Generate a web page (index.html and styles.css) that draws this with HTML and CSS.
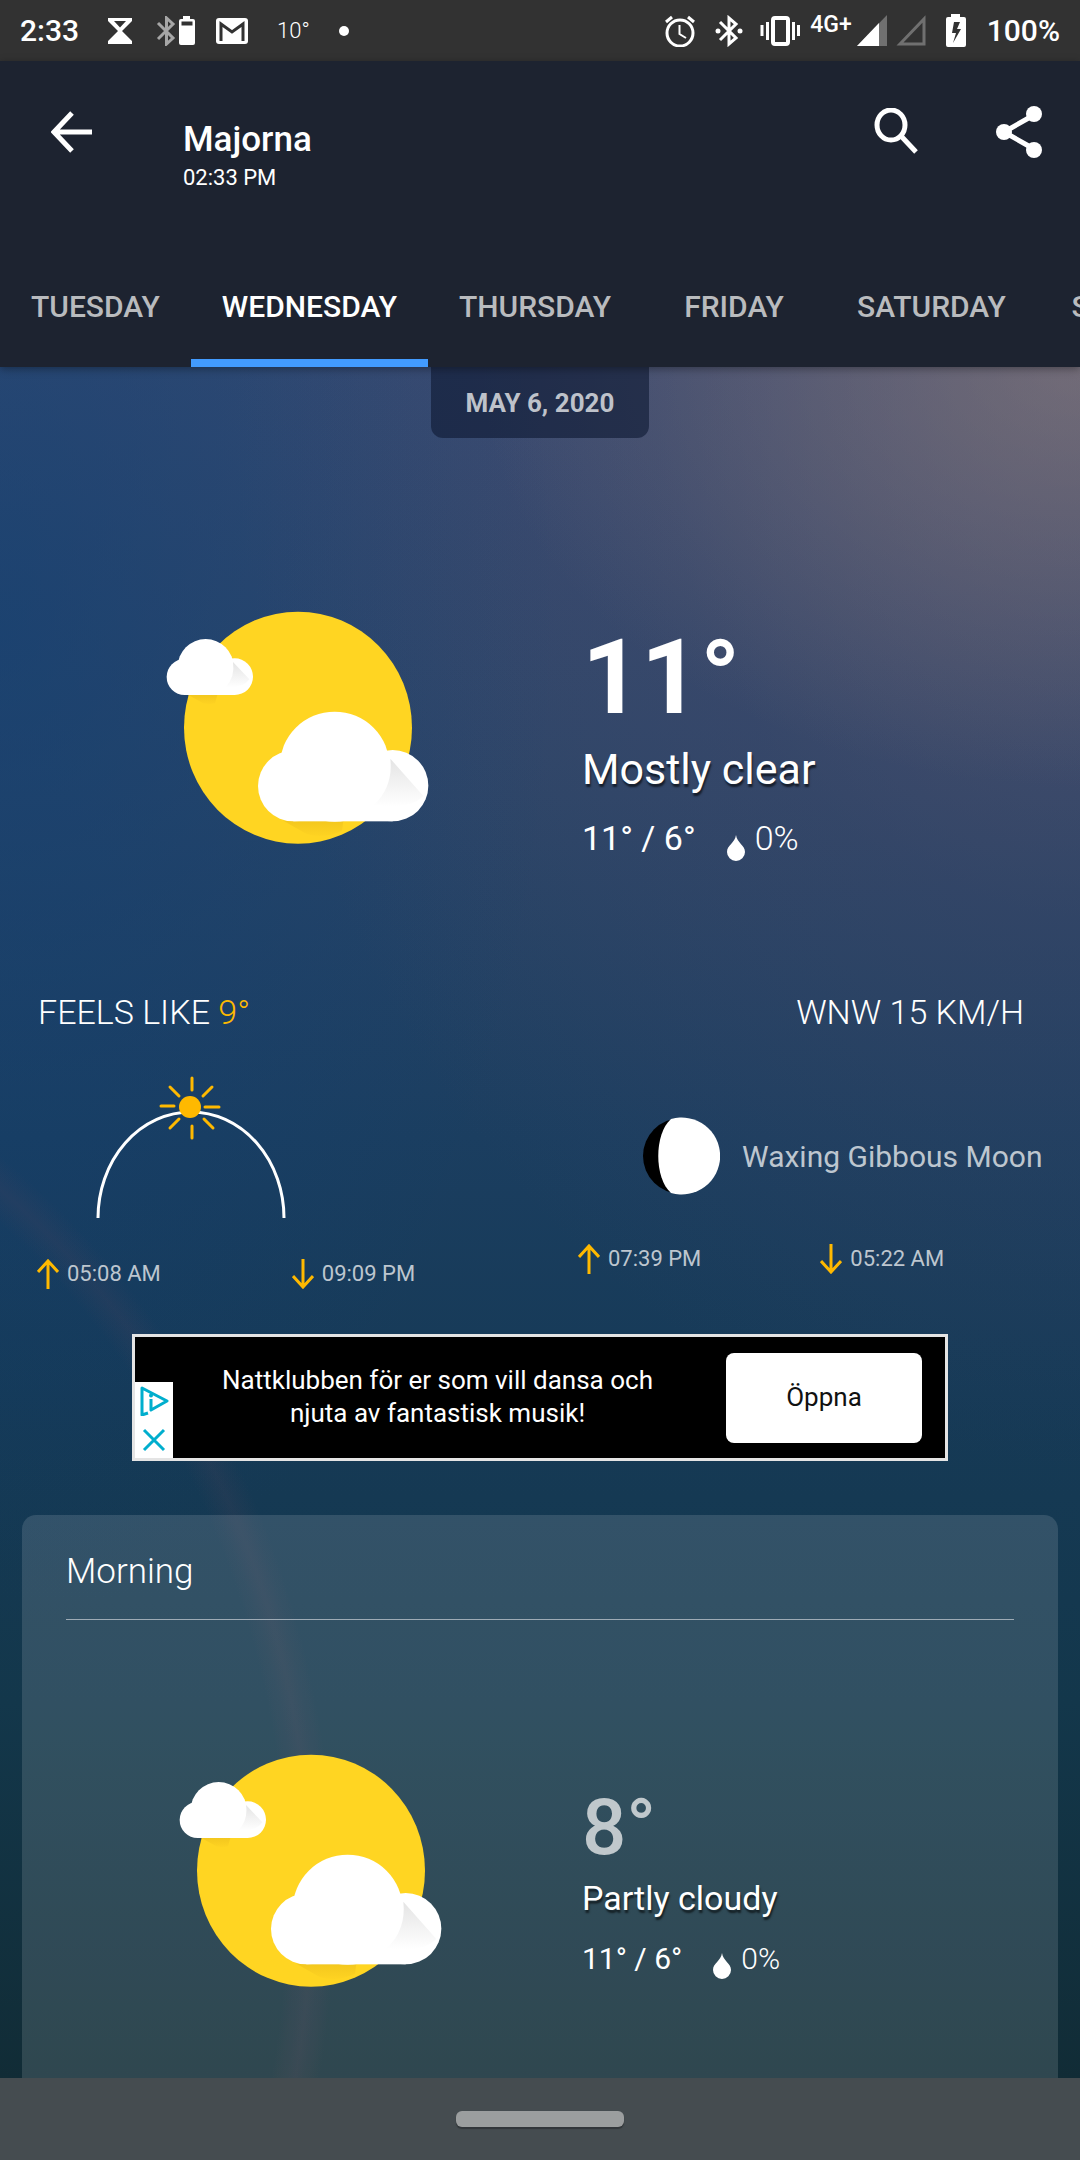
FILE: index.html
```html
<!DOCTYPE html>
<html lang="en">
<head>
<meta charset="utf-8">
<meta name="viewport" content="width=device-width, initial-scale=1">
<title>Majorna weather</title>
<link rel="stylesheet" href="styles.css">
</head>
<body>
<svg class="defs" aria-hidden="true">
  <defs>
    <linearGradient id="fold" x1="0" y1="0" x2="0" y2="1">
      <stop offset="0" stop-color="#e4e4e4"/><stop offset="1" stop-color="#fff"/>
    </linearGradient>
    <linearGradient id="cast" x1="0" y1="0" x2="0" y2="1">
      <stop offset="0" stop-color="#f3c71e"/><stop offset="1" stop-color="#fed322"/>
    </linearGradient>
    <symbol id="sun-clouds" viewBox="0 0 960 840">
      <ellipse cx="474" cy="413" rx="342" ry="348" fill="#ffd522"/>
      <path d="M145 315L190 340Q205 345 225 340L232 315Z" fill="url(#cast)"/>
      <path d="M430 692L500 732Q550 748 606 722L610 692Z" fill="url(#cast)"/>
      <g fill="#fff">
        <circle cx="134" cy="261" r="54"/>
        <circle cx="284" cy="260" r="55"/>
        <circle cx="197" cy="231" r="84"/>
        <rect x="134" y="231" width="150" height="84"/>
        <circle cx="460" cy="588" r="106"/>
        <circle cx="758" cy="587" r="107"/>
        <circle cx="584" cy="530" r="165"/>
        <rect x="460" y="534" width="298" height="160"/>
      </g>
      <path d="M279 216L328 268Q310 295 256 292Q286 262 279 216Z" fill="url(#fold)"/>
      <path d="M751 506L850 618Q810 660 702 645Q760 590 751 506Z" fill="url(#fold)"/>
    </symbol>
    <symbol id="drop" viewBox="0 0 18 26">
      <path d="M9 0C10 8 18 10 18 17A9 9 0 0 1 0 17C0 10 8 8 9 0Z" fill="#fff"/>
    </symbol>
    <symbol id="rise" viewBox="0 0 22 30">
      <path d="M11 30V2M1 13L11 2L21 13" fill="none" stroke="#ffb900" stroke-width="3"/>
    </symbol>
    <symbol id="set" viewBox="0 0 22 30">
      <path d="M11 0V28M1 17L11 28L21 17" fill="none" stroke="#ffb900" stroke-width="3"/>
    </symbol>
  </defs>
</svg>

<div class="app">
  <div class="status">
    <div class="status-group status-left">
      <span class="clock">2:33</span>
      <svg class="hourglass" width="24" height="26" viewBox="0 0 24 26"><path d="M0 0H24V3L14 13L24 23V26H0V23L10 13L0 3ZM6 3L12 9.500L18 3Z" fill="#fff" fill-rule="evenodd"/></svg>
      <svg class="bt-battery" width="40" height="30" viewBox="0 0 40 30"><path d="M2 7L17 22L10.500 28V2L17 8L2 23" fill="none" stroke="#a6a6a6" stroke-width="3"/><path d="M27 3V0H34V3H37Q39 3 39 5V27Q39 29 37 29H25Q23 29 23 27V5Q23 3 25 3ZM25.500 5.500V9.500H36.500V5.500Z" fill="#fff" fill-rule="evenodd"/></svg>
      <svg class="gmail" width="32" height="26" viewBox="0 0 32 26"><rect width="32" height="26" rx="3" fill="#fff"/><path d="M5 23V6L16 14L27 6V23" fill="none" stroke="#323232" stroke-width="3"/></svg>
      <span class="outside">10°</span>
      <span class="dot"></span>
    </div>
    <div class="status-group">
      <svg width="32" height="32" viewBox="0 0 32 32" fill="none" stroke="#fff"><circle cx="16" cy="18" r="13" stroke-width="3"/><path d="M2 7L8 2M30 7L24 2" stroke-width="3"/><path d="M15.500 10V19L22 23" stroke-width="2"/></svg>
      <svg class="bt" width="28" height="32" viewBox="0 0 28 32"><path d="M5 7L21 23L14 29V3L21 9L5 25" fill="none" stroke="#fff" stroke-width="3"/><circle cx="3" cy="16" r="2.500" fill="#fff"/><circle cx="25" cy="16" r="2.500" fill="#fff"/></svg>
      <svg class="vibrate" width="40" height="30" viewBox="0 0 40 30"><rect x="13" y="2" width="15" height="26" rx="2" fill="none" stroke="#fff" stroke-width="4"/><path d="M2 9V20M7.500 6V24M33.500 6V24M38.500 9V20" stroke="#fff" stroke-width="3"/></svg>
      <span class="net">4G+</span>
      <svg class="signal" width="30" height="31" viewBox="0 0 30 31"><path d="M0 31L30 0V31Z" fill="#707070"/><path d="M0 31L22 8V31Z" fill="#fff"/></svg>
      <svg class="signal2" width="30" height="31" viewBox="0 0 30 31"><path d="M4 29L28 4V29Z" fill="none" stroke="#707070" stroke-width="3"/></svg>
      <svg class="charge" width="20" height="33" viewBox="0 0 20 33"><path d="M5 3V0H14V3H18Q20 3 20 5V31Q20 33 18 33H2Q0 33 0 31V5Q0 3 2 3ZM8 8L6 19H10L7 29L15 15H11L14 8Z" fill="#fff" fill-rule="evenodd"/></svg>
      <span class="clock">100%</span>
    </div>
  </div>

  <header class="header">
    <div class="toolbar">
      <button class="icon-btn" aria-label="Back"><svg width="42" height="42" viewBox="0 0 42 42"><path d="M41 21H4M21 2L3 21L21 40" fill="none" stroke="#fff" stroke-width="5"/></svg></button>
      <div class="place">
        <h1>Majorna</h1>
        <p>02:33 PM</p>
      </div>
      <button class="icon-btn search" aria-label="Search"><svg width="46" height="48" viewBox="0 0 46 48"><ellipse cx="17" cy="17" rx="14" ry="15" fill="none" stroke="#fff" stroke-width="5"/><path d="M28 29L42 44" stroke="#fff" stroke-width="5"/></svg></button>
      <button class="icon-btn" aria-label="Share"><svg width="48" height="52" viewBox="0 0 48 52"><path d="M39 9L9 26L39 43" fill="none" stroke="#fff" stroke-width="5"/><circle cx="9" cy="26" r="8" fill="#fff"/><circle cx="39" cy="8" r="8" fill="#fff"/><circle cx="39" cy="44" r="8" fill="#fff"/></svg></button>
    </div>
    <nav class="tabs">
      <a href="#tue">Tuesday</a>
      <a href="#wed" class="active" aria-current="page">Wednesday</a>
      <a href="#thu">Thursday</a>
      <a href="#fri">Friday</a>
      <a href="#sat">Saturday</a>
      <a href="#sun">Sunday</a>
    </nav>
  </header>

  <main class="content">
    <p class="date">May 6, 2020</p>

    <section class="now">
      <svg class="sky" role="img" aria-label="Mostly clear"><use href="#sun-clouds"/></svg>
      <div class="reading">
        <p class="temp">11°</p>
        <p class="summary">Mostly clear</p>
        <p class="range"><span>11° / 6°</span><svg class="drop"><use href="#drop"/></svg><span class="rain">0%</span></p>
      </div>
    </section>

    <section class="facts">
      <p>FEELS LIKE <span class="accent">9°</span></p>
      <p>WNW 15 KM/H</p>
    </section>

    <section class="astro">
      <div class="sun">
        <svg class="arc" width="192" height="144" viewBox="0 0 192 144">
          <path d="M3 142A93 106 0 0 1 189 142" fill="none" stroke="#fff" stroke-width="3"/>
          <circle cx="95" cy="31" r="11" fill="#ffb900"/>
          <path d="M97 2V14M97 50V62M66 30H79M110 31H124M75 11L84 20M117 11L108 20M75 52L84 43M118 52L109 43" stroke="#ffb900" stroke-width="3" stroke-linecap="round"/>
        </svg>
        <div class="times">
          <span class="time"><svg><use href="#rise"/></svg>05:08 AM</span>
          <span class="time"><svg><use href="#set"/></svg>09:09 PM</span>
        </div>
      </div>
      <div class="moon">
        <div class="phase">
          <svg width="78" height="78" viewBox="0 0 78 78"><circle cx="39" cy="39" r="38" fill="#000"/><path d="M29 2A38.500 38.500 0 1 1 29 76C12 61 12 17 29 2Z" fill="#fff"/></svg>
          <span>Waxing Gibbous Moon</span>
        </div>
        <div class="times">
          <span class="time"><svg><use href="#rise"/></svg>07:39 PM</span>
          <span class="time"><svg><use href="#set"/></svg>05:22 AM</span>
        </div>
      </div>
    </section>

    <aside class="ad">
      <div class="ad-badge">
        <svg width="30" height="30" viewBox="0 0 30 30" fill="none" stroke="#00aecd"><path d="M9 27L3 29V2L28 15L12 24V13" stroke-width="3" stroke-linejoin="round"/><circle cx="12" cy="9.500" r="1" stroke-width="2"/></svg>
        <svg width="24" height="24" viewBox="0 0 24 24"><path d="M2 2L22 22M22 2L2 22" stroke="#00aecd" stroke-width="3"/></svg>
      </div>
      <p>Nattklubben för er som vill dansa och njuta av fantastisk musik!</p>
      <button>Öppna</button>
    </aside>

    <section class="card">
      <h2>Morning</h2>
      <div class="period">
        <svg class="sky" role="img" aria-label="Partly cloudy"><use href="#sun-clouds"/></svg>
        <div class="reading">
          <p class="temp">8°</p>
          <p class="summary">Partly cloudy</p>
          <p class="range"><span>11° / 6°</span><svg class="drop"><use href="#drop"/></svg><span class="rain">0%</span></p>
        </div>
      </div>
    </section>
  </main>

  <footer class="system-nav"><span class="handle"></span></footer>
</div>
</body>
</html>
```
FILE: styles.css
```css
* { box-sizing: border-box; }
body, h1, h2, p { margin: 0; font-weight: 400; }
body { font-family: Roboto, "Noto Sans", sans-serif; color: #fff; background: #12303c; }
button { border: 0; padding: 0; background: none; font: inherit; }
svg { display: block; flex: none; }
.defs { position: absolute; width: 0; height: 0; }

.app { min-height: 100vh; display: flex; flex-direction: column; overflow-x: clip; }

/* System status bar */
.status { background: #323232; height: 61px; padding: 0 20px; display: flex; justify-content: space-between; align-items: center; }
.status-group { display: flex; align-items: center; }
.clock { font-size: 30px; font-weight: 500; }
.hourglass { margin-left: 29px; }
.bt-battery { margin-left: 24px; }
.gmail { margin-left: 20px; }
.outside { margin-left: 29px; font-size: 22px; font-weight: 300; }
.dot { width: 10px; height: 10px; border-radius: 50%; background: #fff; margin-left: 29px; }
.bt { margin-left: 19px; }
.vibrate { margin-left: 17px; }
.net { margin-left: 10px; font-size: 23px; line-height: 24px; font-weight: 500; align-self: flex-start; }
.signal { margin-left: 5px; }
.signal2 { margin-left: 9px; }
.charge { margin: 0 21px 0 20px; }

/* App header */
.header { background: #1d2330; position: relative; box-shadow: 0 2px 8px rgba(0, 0, 0, .35); }
.toolbar { display: flex; align-items: flex-start; padding: 45px 37px 0 51px; }
.icon-btn { height: 52px; display: flex; align-items: center; }
.place { flex: 1; padding: 13px 0 0 90px; }
.place h1 { font-size: 35px; line-height: 42px; font-weight: 500; }
.place p { font-size: 22px; line-height: 34px; }
.search { margin-right: 75px; }
.tabs { display: flex; margin-top: 52px; overflow: hidden; }
.tabs a { min-width: 184px; padding: 0 31px; height: 120px; line-height: 120px; text-align: center; font-size: 30px; font-weight: 500; text-transform: uppercase; text-decoration: none; color: #b9bbbe; flex: none; }
.tabs .active { color: #fff; box-shadow: inset 0 -8px #429bff; }

/* Day page over the evening sky */
.content {
  flex: 1; display: flex; flex-direction: column;
  background:
    radial-gradient(800px 915px at -465px 1533px, transparent 94%, rgba(110, 70, 90, .13) 97%, transparent 100%),
    radial-gradient(600px 420px at 100% 0, rgba(150, 135, 125, .45), transparent),
    radial-gradient(850px 1100px at 100% 0, rgba(115, 95, 115, .48), rgba(85, 75, 105, .25) 50%, transparent),
    radial-gradient(560px 1000px at 0 15%, rgba(12, 62, 115, .55), transparent),
    linear-gradient(#374b72, #2a4568 25%, #1b3e60 45%, #163a57 60%, #13374b 78%, #112c36);
}
.date { align-self: center; padding: 0 35px; height: 71px; line-height: 72px; font-size: 26px; font-weight: 700; text-transform: uppercase; color: #bec2ca; background: rgba(14, 26, 52, .62); border-radius: 0 0 12px 12px; }

.now, .period { display: grid; grid-template-columns: 1fr 1fr; }
.now { margin-top: 152px; }
.sky { width: 320px; height: 280px; justify-self: center; }
.now .sky { margin-right: -60px; }
.reading { padding-left: 42px; }
.temp { font-weight: 700; font-size: 103px; line-height: 124px; margin-top: 26px; }
.summary { font-size: 43px; line-height: 52px; margin-top: 3px; text-shadow: 1px 3px 2px rgba(0, 0, 0, .6); }
.range { display: flex; align-items: center; font-size: 34px; line-height: 42px; }
.now .range { margin-top: 22px; }
.drop { width: 18px; height: 26px; align-self: flex-end; margin: 0 10px -2px 31px; }
.rain { font-weight: 300; }

.facts { display: flex; justify-content: space-between; padding: 0 56px 0 38px; margin-top: 121px; font-size: 34px; line-height: 42px; }
.facts p { font-weight: 300; }
.accent { color: #ffb900; }

.astro { display: grid; grid-template-columns: 1fr 1fr; padding-bottom: 45px; color: #bdc6cf; }
.sun, .moon { padding-left: 37px; }
.arc { margin: 43px 0 0 58px; }
.times { display: flex; }
.time { display: flex; align-items: center; gap: 8px; font-size: 22px; line-height: 30px; }
.time svg { width: 22px; height: 30px; }
.sun .times { gap: 131px; margin-top: 39px; }
.moon { padding-left: 38px; }
.moon .times { gap: 119px; margin-top: 49px; }
.phase { display: flex; align-items: center; gap: 22px; margin: 84px 0 0 64px; font-size: 30px; }

/* Banner */
.ad { align-self: center; width: 816px; max-width: 100%; height: 127px; background: #000; border: 3px solid #e4e4e4; display: flex; align-items: center; padding-right: 23px; }
.ad-badge { align-self: flex-end; width: 38px; height: 76px; background: #fff; display: flex; flex-direction: column; align-items: center; justify-content: space-between; padding: 4px 0 6px; }
.ad p { flex: 1; padding: 0 60px 2px 36px; text-align: center; font-size: 26px; line-height: 33px; }
.ad button { width: 196px; height: 90px; border-radius: 8px; background: #fff; color: #111; font-size: 26px; padding-bottom: 2px; }

/* Part-of-day card */
.card { flex: 1; margin: 54px 22px 0; padding: 34px 44px 60px; background: rgba(255, 255, 255, .13); border-radius: 14px 14px 0 0; }
.card h2 { font-size: 35px; line-height: 46px; font-weight: 300; padding-bottom: 24px; border-bottom: 1px solid #9eabb5; }
.period { margin-top: 113px; }
.period .sky { margin-left: 20px; }
.period .temp { font-size: 78px; line-height: 92px; font-weight: 500; color: #c0c8cc; margin-top: 49px; }
.period .summary { font-size: 34px; line-height: 42px; margin-top: 3px; }
.period .range { font-size: 30px; line-height: 36px; margin-top: 22px; }

.system-nav { position: sticky; bottom: 0; height: 82px; background: #454c50; display: flex; justify-content: center; align-items: center; }
.handle { width: 168px; height: 16px; border-radius: 6px; background: #9b9e9f; box-shadow: 0 2px 1px #31363a; }
```
